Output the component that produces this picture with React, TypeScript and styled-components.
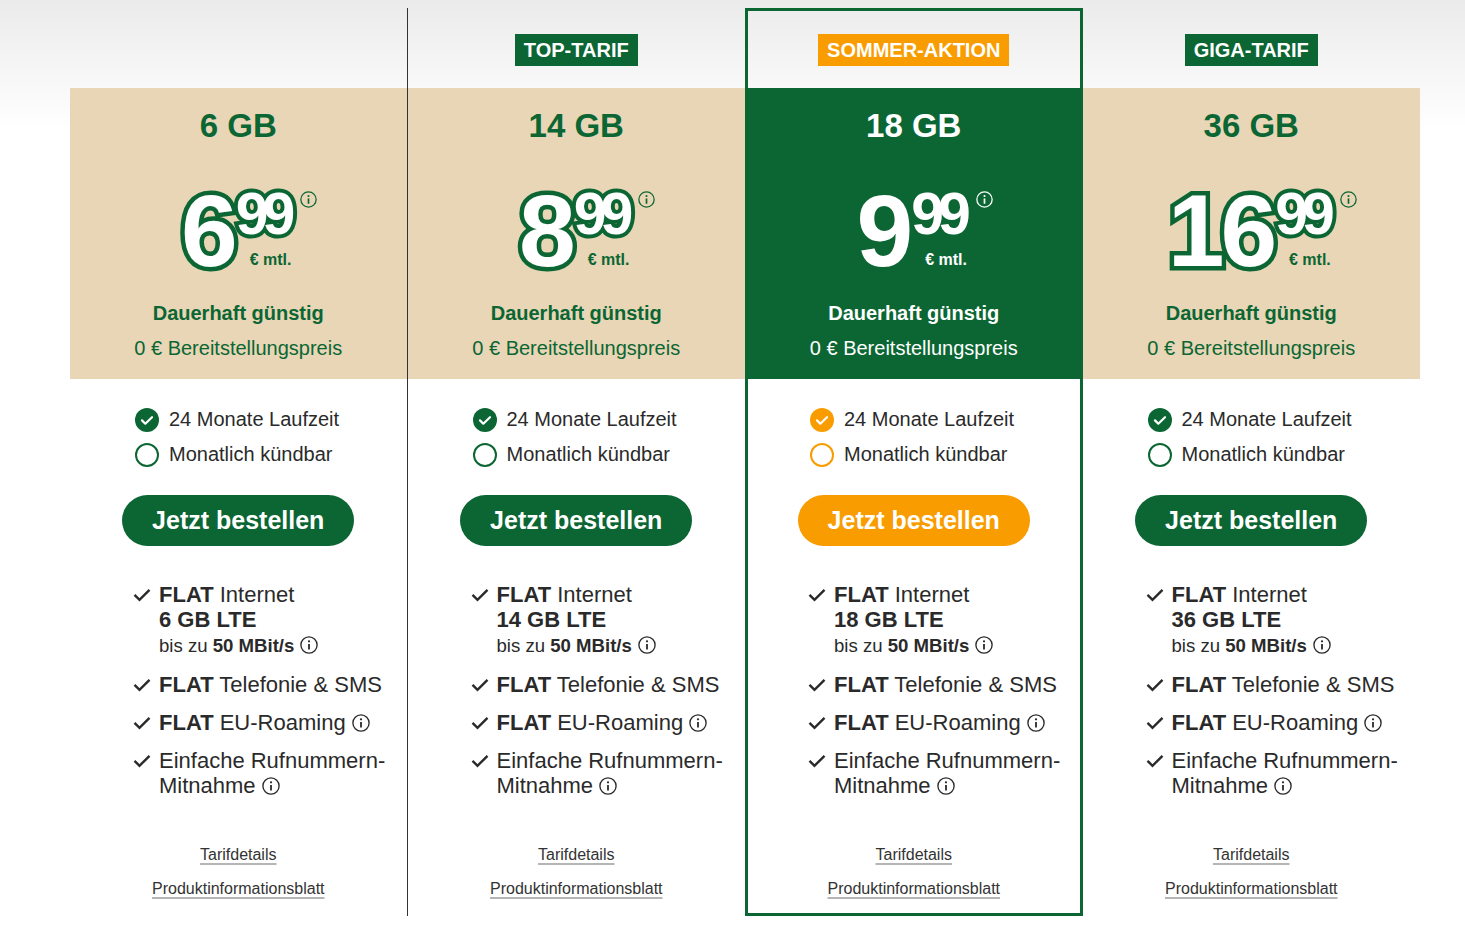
import React from "react";
import styled, { createGlobalStyle, css } from "styled-components";

const green = "#0b6633";
const orange = "#f99c00";
const beige = "#e9d6b7";
const ink = "#2a2a2a";

const Global = createGlobalStyle`
  html, body {
    margin: 0;
    padding: 0;
    background: #fff linear-gradient(to bottom, #ebebeb 0px, #ffffff 130px) no-repeat;
    font-family: "Liberation Sans", Arial, sans-serif;
    color: ${ink};
  }
  * { box-sizing: border-box; }
`;

interface Tariff {
  gb: number;
  euro: string;
  cents: string;
  badge?: string;
}

const tariffs: Tariff[] = [
  { gb: 6, euro: "6", cents: "99" },
  { gb: 14, euro: "8", cents: "99", badge: "TOP-TARIF" },
  { gb: 18, euro: "9", cents: "99", badge: "SOMMER-AKTION" },
  { gb: 36, euro: "16", cents: "99", badge: "GIGA-TARIF" },
];

const Grid = styled.div`
  display: grid;
  grid-template-columns: repeat(4, 1fr);
  width: 1350px;
  margin: 8px 0 0 70px;
`;

const Column = styled.div<{ $hl?: boolean; $divider?: boolean }>`
  display: flex;
  flex-direction: column;
  padding: 3px 0;
  ${(p) => p.$divider && css`border-right: 1px solid #333;`}
  ${(p) => p.$hl && css`border: 3px solid ${green}; padding: 0;`}
`;

const BadgeZone = styled.div`
  height: 77px;
  display: flex;
  align-items: center;
  justify-content: center;
  padding-top: 1px;
`;

const Badge = styled.span<{ $hl?: boolean }>`
  display: inline-flex;
  align-items: center;
  height: 32px;
  padding: 0 9px;
  background: ${(p) => (p.$hl ? orange : green)};
  color: #fff;
  font-weight: 700;
  font-size: 20px;
`;

const Band = styled.div<{ $hl?: boolean }>`
  height: 291px;
  display: flex;
  flex-direction: column;
  align-items: center;
  background: ${(p) => (p.$hl ? green : beige)};
  color: ${(p) => (p.$hl ? "#fff" : green)};
`;

const Volume = styled.div`
  margin-top: 18px;
  font-size: 33px;
  line-height: 40px;
  font-weight: 700;
`;

const Price = styled.div`
  position: relative;
  margin-top: 34px;
  height: 102px;
  display: flex;
  align-items: flex-start;
`;

const outline = (w: number) => css`
  color: #fff;
  -webkit-text-stroke: ${w}px ${green};
  paint-order: stroke fill;
`;

const Euro = styled.span<{ $hl?: boolean }>`
  font-size: 102px;
  line-height: 102px;
  font-weight: 700;
  letter-spacing: -4px;
  color: #fff;
  ${(p) => !p.$hl && outline(9)}
`;

const Side = styled.div`
  display: flex;
  flex-direction: column;
  align-items: flex-end;
  margin-left: 2px;
`;

const Cents = styled.span<{ $hl?: boolean }>`
  font-size: 59px;
  line-height: 58px;
  margin-top: 5px;
  font-weight: 700;
  letter-spacing: -6px;
  padding-right: 6px;
  color: #fff;
  ${(p) => !p.$hl && outline(8)}
`;

const Unit = styled.span`
  margin-top: 7px;
  padding-right: 4px;
  font-size: 16px;
  line-height: 20px;
  font-weight: 700;
`;

const PriceInfo = styled.span`
  position: absolute;
  right: -22px;
  top: 11px;
  display: flex;
`;

const Claim = styled.div`
  margin-top: 17px;
  font-size: 20px;
  line-height: 28px;
  font-weight: 700;
`;

const Fee = styled.div`
  margin-top: 7px;
  font-size: 20px;
  line-height: 28px;
`;

const Terms = styled.div<{ $hl?: boolean }>`
  padding: 23px 0 0 ${(p) => (p.$hl ? 62 : 65)}px;
`;

const Term = styled.div`
  height: 35px;
  display: flex;
  align-items: center;
  gap: 10px;
  font-size: 20px;
`;

const ButtonRow = styled.div`
  display: flex;
  justify-content: center;
  margin-top: 23px;
`;

const Order = styled.button<{ $hl?: boolean }>`
  width: 232px;
  height: 51px;
  border: 0;
  border-radius: 26px;
  background: ${(p) => (p.$hl ? orange : green)};
  color: #fff;
  font-family: inherit;
  font-size: 25px;
  font-weight: 700;
  cursor: pointer;
`;

const Features = styled.ul<{ $hl?: boolean }>`
  list-style: none;
  margin: 36px 0 0;
  padding: 0 0 0 ${(p) => (p.$hl ? 60 : 63)}px;
  display: flex;
  flex-direction: column;
  gap: 13px;
`;

const Feature = styled.li`
  display: flex;
  gap: 8px;
  font-size: 22px;
  line-height: 25px;
  b { font-weight: 700; }
  svg { flex: none; }
`;

const Tick = styled.span`
  display: flex;
  height: 25px;
  align-items: center;
`;

const Sub = styled.div`
  font-size: 18.6px;
  line-height: 27px;
`;

const InlineInfo = styled.span`
  display: inline-flex;
  vertical-align: -2px;
  margin-left: 6px;
`;

const Links = styled.div`
  margin-top: 47px;
  padding-bottom: 14px;
  display: flex;
  flex-direction: column;
  align-items: center;
  gap: 14px;
`;

const DocLink = styled.a`
  font-size: 16px;
  line-height: 20px;
  color: #333;
  text-decoration: underline;
  text-decoration-color: #b5b5b5;
  text-decoration-thickness: 2px;
  text-underline-offset: 3px;
`;

const InfoIcon = ({ size = 16, color = ink }: { size?: number; color?: string }) => (
  <svg width={size} height={size} viewBox="0 0 16 16" fill="none">
    <circle cx="8" cy="8" r="7.2" stroke={color} strokeWidth="1.2" />
    <circle cx="8" cy="4.7" r="1" fill={color} />
    <path d="M8 7v5" stroke={color} strokeWidth="1.6" />
  </svg>
);

const CircleCheck = ({ color, on }: { color: string; on: boolean }) => (
  <svg width="24" height="24" viewBox="0 0 24 24" fill="none">
    {on ? (
      <>
        <circle cx="12" cy="12" r="12" fill={color} />
        <path d="M7 12.4l3.3 3.3L17 9.2" stroke="#fff" strokeWidth="2.2" strokeLinecap="round" strokeLinejoin="round" />
      </>
    ) : (
      <circle cx="12" cy="12" r="11" stroke={color} strokeWidth="2" />
    )}
  </svg>
);

const Check = () => (
  <Tick>
    <svg width="18" height="14" viewBox="0 0 18 14" fill="none">
      <path d="M1.5 6.8l5 5L16.5 1.8" stroke={ink} strokeWidth="2.4" />
    </svg>
  </Tick>
);

const TariffColumn = ({ t, index }: { t: Tariff; index: number }) => {
  const hl = index === 2;
  const accent = hl ? orange : green;
  return (
    <Column $hl={hl} $divider={index === 0}>
      <BadgeZone>{t.badge && <Badge $hl={hl}>{t.badge}</Badge>}</BadgeZone>
      <Band $hl={hl}>
        <Volume>{t.gb} GB</Volume>
        <Price>
          <Euro $hl={hl}>{t.euro}</Euro>
          <Side>
            <Cents $hl={hl}>{t.cents}</Cents>
            <Unit>€ mtl.</Unit>
          </Side>
          <PriceInfo>
            <InfoIcon size={17} color={hl ? "#fff" : green} />
          </PriceInfo>
        </Price>
        <Claim>Dauerhaft günstig</Claim>
        <Fee>0 € Bereitstellungspreis</Fee>
      </Band>
      <Terms $hl={hl}>
        <Term>
          <CircleCheck color={accent} on />
          24 Monate Laufzeit
        </Term>
        <Term>
          <CircleCheck color={accent} on={false} />
          Monatlich kündbar
        </Term>
      </Terms>
      <ButtonRow>
        <Order $hl={hl}>Jetzt bestellen</Order>
      </ButtonRow>
      <Features $hl={hl}>
        <Feature>
          <Check />
          <div>
            <b>FLAT</b> Internet
            <br />
            <b>{t.gb} GB LTE</b>
            <Sub>
              bis zu <b>50 MBit/s</b>
              <InlineInfo>
                <InfoIcon size={18} />
              </InlineInfo>
            </Sub>
          </div>
        </Feature>
        <Feature>
          <Check />
          <div>
            <b>FLAT</b> Telefonie &amp; SMS
          </div>
        </Feature>
        <Feature>
          <Check />
          <div>
            <b>FLAT</b> EU-Roaming
            <InlineInfo>
              <InfoIcon size={18} />
            </InlineInfo>
          </div>
        </Feature>
        <Feature>
          <Check />
          <div>
            Einfache Rufnummern-
            <br />
            Mitnahme
            <InlineInfo>
              <InfoIcon size={18} />
            </InlineInfo>
          </div>
        </Feature>
      </Features>
      <Links>
        <DocLink href="#">Tarifdetails</DocLink>
        <DocLink href="#">Produktinformationsblatt</DocLink>
      </Links>
    </Column>
  );
};

export default function App() {
  return (
    <>
      <Global />
      <Grid>
        {tariffs.map((t, i) => (
          <TariffColumn key={t.gb} t={t} index={i} />
        ))}
      </Grid>
    </>
  );
}
